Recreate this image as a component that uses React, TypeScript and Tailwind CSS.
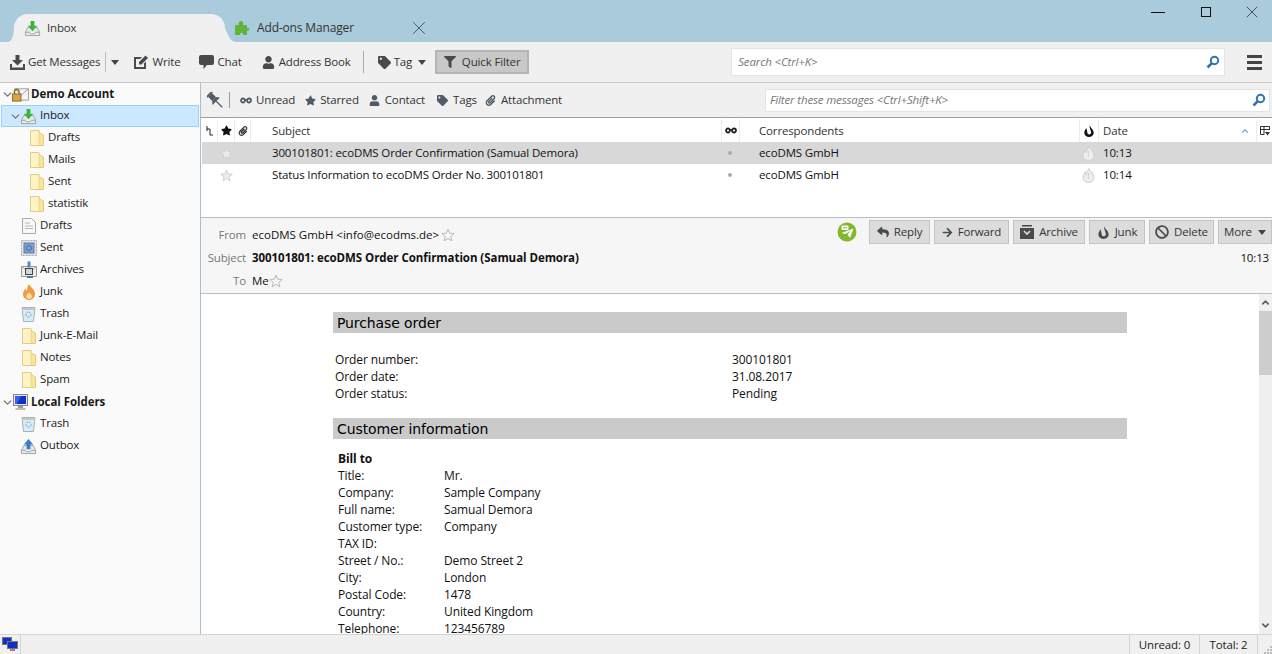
import { ReactNode } from 'react';
import {
  FaUser, FaTag, FaFilter, FaStar, FaPaperclip, FaBan, FaReply, FaArrowRight,
} from 'react-icons/fa';
import { ChevronDown, ChevronUp, X } from 'lucide-react';

const Tray = ({ arrow, up }: { arrow: string; up?: boolean }) => (
  <svg width="17" height="17" viewBox="0 0 18 18" className="shrink-0">
    <path d="M4 8 L1.5 13 V16.5 H16.5 V13 L14 8 Z" fill="#e6e9ea" stroke="#9aa3a8" />
    <path d="M1.5 13 H6 L7 14.5 H11 L12 13 H16.5" fill="#fff" stroke="#9aa3a8" />
    {up ? (
      <path d="M9 1 L14 7 H11 V12 H7 V7 H4 Z" fill={arrow} />
    ) : (
      <path d="M7 1 H11 V6 H14 L9 12 L4 6 H7 Z" fill={arrow} />
    )}
  </svg>
);

const Folder = () => (
  <svg width="14" height="16" viewBox="0 0 14 16" className="shrink-0">
    <path d="M.5 .5 H9 L9.5 3 L13.5 5 V15.5 H.5 Z" fill="#fbe39a" stroke="#e4cd83" />
    <path d="M9 1 V15" stroke="#e8d48e" />
    <rect x="1" y="1" width="7.5" height="14" fill="#fdf3c4" />
  </svg>
);

const DraftIcon = () => (
  <svg width="14" height="16" viewBox="0 0 14 16" className="shrink-0">
    <path d="M.5 .5 H9.5 L13.5 4.5 V15.5 H.5 Z" fill="#f7f7f7" stroke="#aaa" />
    <path d="M3 5 H8 M3 8 H11 M3 10.5 H11" stroke="#bbb" />
  </svg>
);

const SentIcon = () => (
  <svg width="16" height="16" viewBox="0 0 16 16" className="shrink-0">
    <rect x=".5" y=".5" width="15" height="15" fill="#e4e4e4" stroke="#aaa" strokeDasharray="2 1" />
    <rect x="3" y="3" width="10" height="10" fill="#7b9fcf" stroke="#5a7fb0" />
    <circle cx="8" cy="8" r="2.5" fill="none" stroke="#4d6f9f" />
  </svg>
);

const ArchiveIcon = () => (
  <svg width="16" height="18" viewBox="0 0 16 18" className="shrink-0">
    <path d="M.5 5.5 H15.5 V15.5 H.5 Z" fill="#eee" stroke="#999" />
    <path d="M.5 5.5 L8 11 L15.5 5.5" fill="none" stroke="#aaa" />
    <rect x="6.5" y=".5" width="3" height="6" fill="#4f8fc4" />
    <rect x="4.5" y="7.5" width="7" height="6" fill="#d5d5d5" stroke="#444" />
    <path d="M6 15 H12 V17 H6 Z" fill="#3c7db3" />
  </svg>
);

const JunkIcon = () => (
  <svg width="14" height="16" viewBox="0 0 14 16" className="shrink-0">
    <path d="M7 0 C8 3 13 5 13 10 C13 13.5 10 16 7 16 C4 16 1 13.5 1 10 C1 7.5 2.5 6 3.5 4.5 C4 6 4.5 6.5 5.2 6.8 C5 4 5.5 2 7 0 Z" fill="#ef9a3e" />
    <path d="M7 8 C8 10 10 10.5 10 12.5 C10 14 8.5 15 7 15 C5.5 15 4 14 4 12.5 C4 10.5 6.5 10 7 8 Z" fill="#fbdca8" />
  </svg>
);

const TrashIcon = () => (
  <svg width="15" height="16" viewBox="0 0 14 16" className="shrink-0">
    <path d="M.5 1.5 H13.5 L12 15.5 H2 Z" fill="#d9ecf5" stroke="#a3b4bc" />
    <path d="M.5 3 H13.5" stroke="#c6c6c6" strokeWidth="2" />
    <circle cx="7" cy="8.5" r="2.5" fill="none" stroke="#6d9fc0" strokeDasharray="2 1" />
  </svg>
);

const Monitor = () => (
  <svg width="15" height="16" viewBox="0 0 15 16" className="shrink-0">
    <rect x=".5" y=".5" width="14" height="11" fill="#e4e4e4" stroke="#888" />
    <rect x="2" y="2" width="11" height="8" fill="#1030c8" />
    <path d="M2 2 H8 L4 10 H2 Z" fill="#3a62e6" />
    <rect x="5" y="12" width="5" height="2" fill="#999" />
    <rect x="2.5" y="14" width="10" height="2" fill="#bbb" />
  </svg>
);

const AccountIcon = () => (
  <svg width="17" height="16" viewBox="0 0 18 16" className="shrink-0">
    <path d="M3 2.5 H17.5 V14.5 H3 Z" fill="#f4f4f4" stroke="#999" />
    <path d="M3 2.5 L10 9 L17.5 2.5" fill="none" stroke="#999" />
    <rect x=".5" y="8" width="9" height="7.5" fill="#d9a441" stroke="#8b6a22" />
    <path d="M2.5 8 V5.5 A2.5 2.5 0 0 1 7.5 5.5 V8" fill="none" stroke="#8b6a22" strokeWidth="1.3" />
  </svg>
);

const Glasses = ({ className = '' }: { className?: string }) => (
  <svg width="12" height="7" viewBox="0 0 12 7" className={`shrink-0 ${className}`}>
    <circle cx="3" cy="3.5" r="2" fill="none" stroke="currentColor" strokeWidth="1.8" />
    <circle cx="9" cy="3.5" r="2" fill="none" stroke="currentColor" strokeWidth="1.8" />
    <path d="M4 2.6 H8" stroke="currentColor" />
  </svg>
);

const Flame = ({ className = '', size = 14 }: { className?: string; size?: number }) => (
  <svg width={size} height={size} viewBox="0 0 14 14" className={`shrink-0 ${className}`}>
    <path d="M8 0 C8 3 12.5 5 12.5 9 C12.5 12 10 14 7 14 C4 14 1.5 12 1.5 9 C1.5 6.5 3 5 4 3.5 C4 5 5 6 5 8.5 C5 10 6 11 7 11 C8.5 11 9.5 10 9.5 8.5 C9.5 6 7 4 8 0 Z" fill="currentColor" />
  </svg>
);

const FaintFlame = () => (
  <svg width="13" height="15" viewBox="0 0 13 15" className="shrink-0">
    <path d="M7 .5 C7.5 3 12 5 12 9.5 C12 12.5 9.5 14.5 6.5 14.5 C3.5 14.5 1 12.5 1 9.5 C1 7 2.5 5 3.5 3.5 C3.5 5 4 6 4.5 7 C4.5 5 5.5 2.5 7 .5 Z" fill="#ededed" stroke="#cfcfcf" />
    <path d="M6.5 5 V11" stroke="#d6d6d6" />
  </svg>
);

const Star = ({ size, fill, stroke }: { size: number; fill: string; stroke: string }) => (
  <svg width={size} height={size} viewBox="0 0 14 14" className="shrink-0">
    <path d="M7 1 L8.7 5.2 L13.2 5.5 L9.7 8.4 L10.9 12.9 L7 10.4 L3.1 12.9 L4.3 8.4 L.8 5.5 L5.3 5.2 Z" fill={fill} stroke={stroke} />
  </svg>
);

const Caret = ({ className = '' }: { className?: string }) => (
  <span className={`block w-0 h-0 border-x-[4px] border-x-transparent border-t-[5px] border-t-[#444] shrink-0 ${className}`} />
);

const Loupe = () => (
  <svg width="14" height="14" viewBox="0 0 14 14" className="shrink-0">
    <circle cx="8.5" cy="5.5" r="3.7" fill="none" stroke="#2f72b0" strokeWidth="2" />
    <path d="M5.8 8.2 L1.5 12.5" stroke="#2f72b0" strokeWidth="2.6" />
  </svg>
);

const Pen = () => (
  <svg width="15" height="14" viewBox="0 0 15 14" className="shrink-0">
    <path d="M0 2 H8 L6 4 H2 V12 H10 V8.5 L12 6.5 V14 H0 Z" fill="#4a4a4a" />
    <path d="M5 7 L11.5 .5 L14 3 L7.5 9.5 H5 Z" fill="#4a4a4a" />
  </svg>
);

const Bubble = () => (
  <svg width="15" height="14" viewBox="0 0 15 14" className="shrink-0">
    <path d="M2 0 H13 A2 2 0 0 1 15 2 V8 A2 2 0 0 1 13 10 H8 L4.5 14 V10 H2 A2 2 0 0 1 0 8 V2 A2 2 0 0 1 2 0 Z" fill="#4a4a4a" />
  </svg>
);

const DownloadIcon = () => (
  <svg width="15" height="15" viewBox="0 0 15 15" className="shrink-0">
    <path d="M5.5 0 H9.5 V5 H13 L7.5 10.5 L2 5 H5.5 Z" fill="#4a4a4a" />
    <path d="M0 9 H2 V12.5 H13 V9 H15 V15 H0 Z" fill="#4a4a4a" />
  </svg>
);

const Pin = () => (
  <svg width="17" height="17" viewBox="0 0 16 16" className="shrink-0">
    <g transform="rotate(-45 8 8)" fill="#4f5b66">
      <rect x="4.5" y="-1" width="7" height="2" />
      <rect x="5.5" y="1" width="5" height="5" />
      <path d="M5.5 6 H10.5 L13 9 H3 Z" />
      <rect x="7.4" y="9" width="1.2" height="8" />
    </g>
  </svg>
);

const FolderRow = ({ icon, label, indent = 0, bold, twisty, selected }: { icon: ReactNode; label: string; indent?: number; bold?: boolean; twisty?: boolean; selected?: boolean }) => (
  <div className={`h-[22px] mx-[1px] flex items-center border ${selected ? 'bg-[#cce8ff] border-[#99d1ff]' : 'border-transparent'}`} style={{ paddingLeft: indent }}>
    <span className="w-[10px] shrink-0 flex justify-center">
      {twisty && <ChevronDown size={13} strokeWidth={2.5} className="text-[#777] shrink-0" />}
    </span>
    <span className="w-[17px] shrink-0 flex justify-center">{icon}</span>
    <span className={`${bold ? 'ml-[2px] font-bold tracking-[-0.05px]' : 'ml-[3px] pb-[2px]'} text-[#1a1a1a] whitespace-nowrap`}>{label}</span>
  </div>
);

const ToolItem = ({ icon, label, className = 'gap-[4px]' }: { icon: ReactNode; label: string; className?: string }) => (
  <div className={`flex items-center ${className}`}>
    {icon}
    <span className="whitespace-nowrap">{label}</span>
  </div>
);

const HeaderButton = ({ icon, label, w, caret }: { icon?: ReactNode; label: string; w: string; caret?: boolean }) => (
  <div className={`${w} h-[24px] bg-[#dcdcdc] border border-[#c4c4c4] flex items-center justify-center gap-[5px] text-[#333] shrink-0`}>
    {icon}
    <span>{label}</span>
    {caret && <Caret className="ml-[1px]" />}
  </div>
);

const MessageRow = ({ subject, time, selected }: { subject: string; time: string; selected?: boolean }) => (
  <div className={`h-[22px] ml-[1px] flex items-center text-[#111] ${selected ? 'bg-[#d8d8d8]' : ''}`}>
    <span className="w-[33px] shrink-0 flex justify-end pr-[2px]"><Star size={13} fill="#ececec" stroke="#cfcfcf" /></span>
    <span className="w-[16px] shrink-0" />
    <span className="w-[470px] pl-[21px] shrink-0 whitespace-nowrap">{subject}</span>
    <span className="w-[18px] shrink-0 flex justify-center"><span className="w-[4px] h-[4px] rounded-full bg-[#aaa]" /></span>
    <span className="w-[340px] pl-[20px] shrink-0">ecoDMS GmbH</span>
    <span className="w-[19px] shrink-0 flex justify-center"><FaintFlame /></span>
    <span className="pl-[5px]">{time}</span>
  </div>
);

const ColHead = ({ w, children, className = '' }: { w: string; children?: ReactNode; className?: string }) => (
  <div className={`${w} h-full shrink-0 flex items-center border-r border-[#ececec] ${className}`}>{children}</div>
);

const SectionBar = ({ title }: { title: string }) => (
  <div className="h-[21px] bg-[#cacaca] pl-[4px] pt-[2px] flex items-center font-['DejaVu_Sans',sans-serif] text-[14px] text-black">{title}</div>
);

const billTo: [string, string][] = [
  ['Title:', 'Mr.'],
  ['Company:', 'Sample Company'],
  ['Full name:', 'Samual Demora'],
  ['Customer type:', 'Company'],
  ['TAX ID:', ''],
  ['Street / No.:', 'Demo Street 2'],
  ['City:', 'London'],
  ['Postal Code:', '1478'],
  ['Country:', 'United Kingdom'],
  ['Telephone:', '123456789'],
];

const order: [string, string][] = [
  ['Order number:', '300101801'],
  ['Order date:', '31.08.2017'],
  ['Order status:', 'Pending'],
];

export default function App() {
  return (
    <div className="w-[1272px] h-[654px] overflow-hidden flex flex-col bg-white font-['Open_Sans',sans-serif] text-[11.5px] tracking-[-0.15px] text-[#333]">
      {/* Title bar / tabs */}
      <div className="h-[42px] shrink-0 bg-[#a9cbdc] flex items-end text-[#333]">
        <div className="relative ml-[14px] w-[211px] h-[28px] bg-[#f0f0f0] rounded-t-[14px] flex items-center pl-[10px] gap-[6px]">
          {/* flared tab feet */}
          <svg width="6" height="14" viewBox="0 0 6 14" className="absolute -left-[6px] bottom-0">
            <path d="M6 0 C6 8 3 14 0 14 H6 Z" fill="#f0f0f0" />
          </svg>
          <svg width="11" height="14" viewBox="0 0 11 14" className="absolute -right-[11px] bottom-0">
            <path d="M0 0 C3 8 6 14 11 14 H0 Z" fill="#f0f0f0" />
          </svg>
          <Tray arrow="#3eb53a" />
          <span>Inbox</span>
        </div>
        <div className="w-[208px] h-[28px] flex items-center pl-[9px]">
          <svg width="16" height="16" viewBox="0 0 16 16" className="shrink-0 relative">
            <path d="M1 5 H5 C4 2 6 1 7 1 C8 1 10 2 9 5 H13 V8 C16 7 16 11 13 11 V15 H9 C10 12 6 12 6 15 H1 Z" fill="#62b33c" />
          </svg>
          <span className="ml-[7px] w-[151px] text-[12px]">Add-ons Manager</span>
          <X size={22} strokeWidth={0.8} className="text-[#333] shrink-0" />
        </div>
        <div className="ml-auto h-full flex items-start pt-[6px] text-[#111]">
          <div className="w-[14px] h-[12px] flex items-center"><span className="w-full h-[1px] bg-[#111]" /></div>
          <div className="ml-[36px] w-[10px] h-[10px] mt-[1px] border border-[#111]" />
          <X size={20} strokeWidth={0.8} className="ml-[31px] mr-[10px] -mt-[4px] text-[#111]" />
        </div>
      </div>

      {/* Main toolbar */}
      <div className="h-[41px] shrink-0 bg-[#f0f0f0] border-b border-[#c8c8c8] flex items-center">
        <ToolItem className="ml-[10px] gap-[3px]" icon={<DownloadIcon />} label="Get Messages" />
        <span className="ml-[5px] w-[1px] h-[20px] bg-[#bbb]" />
        <Caret className="ml-[5px]" />
        <ToolItem className="ml-[15px] gap-[3px]" icon={<Pen />} label="Write" />
        <ToolItem className="ml-[19px] gap-[3px]" icon={<Bubble />} label="Chat" />
        <ToolItem className="ml-[20px] gap-[4px]" icon={<FaUser size={13} className="text-[#4a4a4a]" />} label="Address Book" />
        <span className="ml-[12px] w-[1px] h-[22px] bg-[#aaa]" />
        <ToolItem className="ml-[14px] gap-[3px]" icon={<FaTag size={13} className="text-[#4a4a4a]" />} label="Tag" />
        <Caret className="ml-[6px]" />
        <div className="ml-[9px] w-[94px] h-[24px] bg-[#c8c8c8] border-2 border-[#b4b4b4] flex items-center justify-center gap-[6px]">
          <FaFilter size={12} className="text-[#4a4a4a]" />
          <span>Quick Filter</span>
        </div>
        <div className="ml-[202px] w-[494px] h-[28px] bg-white border border-[#e4e4e4] flex items-center justify-between pl-[6px] pr-[4px] italic text-[#777]">
          <span>Search &lt;Ctrl+K&gt;</span>
          <span className="not-italic"><Loupe /></span>
        </div>
        <div className="ml-[22px] w-[15px] flex flex-col gap-[3px]">
          <span className="h-[3px] bg-[#444]" />
          <span className="h-[3px] bg-[#444]" />
          <span className="h-[3px] bg-[#444]" />
        </div>
      </div>

      <div className="flex-1 min-h-0 flex">
        {/* Folder pane */}
        <div className="w-[201px] shrink-0 bg-[#fafafa] border-r border-[#a9bcd0]">
          <FolderRow twisty bold icon={<AccountIcon />} label="Demo Account" />
          <FolderRow twisty selected indent={8} icon={<Tray arrow="#3eb53a" />} label="Inbox" />
          <FolderRow indent={16} icon={<Folder />} label="Drafts" />
          <FolderRow indent={16} icon={<Folder />} label="Mails" />
          <FolderRow indent={16} icon={<Folder />} label="Sent" />
          <FolderRow indent={16} icon={<Folder />} label="statistik" />
          <FolderRow indent={8} icon={<DraftIcon />} label="Drafts" />
          <FolderRow indent={8} icon={<SentIcon />} label="Sent" />
          <FolderRow indent={8} icon={<ArchiveIcon />} label="Archives" />
          <FolderRow indent={8} icon={<JunkIcon />} label="Junk" />
          <FolderRow indent={8} icon={<TrashIcon />} label="Trash" />
          <FolderRow indent={8} icon={<Folder />} label="Junk-E-Mail" />
          <FolderRow indent={8} icon={<Folder />} label="Notes" />
          <FolderRow indent={8} icon={<Folder />} label="Spam" />
          <FolderRow twisty bold icon={<Monitor />} label="Local Folders" />
          <FolderRow indent={8} icon={<TrashIcon />} label="Trash" />
          <FolderRow indent={8} icon={<Tray arrow="#3a7fc4" up />} label="Outbox" />
        </div>

        <div className="flex-1 min-w-0 flex flex-col">
          {/* Quick filter bar */}
          <div className="h-[35px] shrink-0 bg-[#f0f0f0] border-b border-[#a0a0a0] flex items-center">
            <span className="ml-[6px]"><Pin /></span>
            <span className="ml-[5px] w-[1px] h-[16px] bg-[#999]" />
            <ToolItem className="ml-[10px] gap-[4px]" icon={<Glasses className="text-[#4f5b66]" />} label="Unread" />
            <ToolItem className="ml-[10px] gap-[4px]" icon={<FaStar size={11} className="text-[#4f5b66]" />} label="Starred" />
            <ToolItem className="ml-[10px] gap-[5px]" icon={<FaUser size={11} className="text-[#4f5b66]" />} label="Contact" />
            <ToolItem className="ml-[12px] gap-[5px]" icon={<FaTag size={11} className="text-[#4f5b66]" />} label="Tags" />
            <ToolItem className="ml-[8px] gap-[5px]" icon={<FaPaperclip size={11} className="text-[#4f5b66]" />} label="Attachment" />
            <div className="ml-auto mr-[2px] w-[505px] h-[23px] bg-white border border-[#e4e4e4] flex items-center justify-between pl-[4px] pr-[3px] italic text-[#777]">
              <span>Filter these messages &lt;Ctrl+Shift+K&gt;</span>
              <span className="not-italic"><Loupe /></span>
            </div>
          </div>

          {/* Thread pane */}
          <div className="h-[100px] shrink-0 border-b border-[#b4c0cc]">
            <div className="h-[24px] pt-[1px] flex items-center text-[#333]">
              <ColHead w="w-[17px]" className="justify-center">
                <svg width="7" height="10" viewBox="0 0 7 10"><path d="M1 0 V5 M1 3 H4 V9 H7" fill="none" stroke="#222" /></svg>
              </ColHead>
              <ColHead w="w-[17px]" className="justify-center"><FaStar size={11} className="text-[#111]" /></ColHead>
              <ColHead w="w-[16px]" className="justify-center"><FaPaperclip size={10} className="text-[#333]" /></ColHead>
              <ColHead w="w-[471px]" className="pl-[21px]">Subject</ColHead>
              <ColHead w="w-[18px]" className="justify-center"><Glasses className="text-[#222]" /></ColHead>
              <ColHead w="w-[340px]" className="pl-[19px]">Correspondents</ColHead>
              <ColHead w="w-[19px]" className="justify-center"><Flame size={12} className="text-[#111]" /></ColHead>
              <ColHead w="w-[158px]" className="pl-[4px] justify-between pr-[6px]">
                Date
                <ChevronUp size={10} strokeWidth={3} className="text-[#6fb0d8]" />
              </ColHead>
              <div className="pl-[3px]">
                <svg width="10" height="10" viewBox="0 0 10 10"><path d="M.5 .5 H9.5 V4 M.5 .5 V8.5 H4 M.5 3.5 H9.5 M4 .5 V8.5" fill="none" stroke="#333" /><path d="M5 6 H10 L7.5 9.5 Z" fill="#333" /></svg>
              </div>
            </div>
            <MessageRow selected subject="300101801: ecoDMS Order Confirmation (Samual Demora)" time="10:13" />
            <MessageRow subject="Status Information to ecoDMS Order No. 300101801" time="10:14" />
          </div>

          {/* Message header */}
          <div className="h-[76px] shrink-0 bg-[#f6f6f6] border-b border-[#b4c0cc] relative text-[#111]">
            <div className="flex flex-col pt-[5px]">
              <div className="h-[23px] flex items-center">
                <span className="w-[45px] text-right text-[#777]">From</span>
                <span className="ml-[6px] tracking-normal">ecoDMS GmbH &lt;info@ecodms.de&gt;</span>
                <span className="ml-[2px]"><Star size={14} fill="#f6f6f6" stroke="#b5bcc0" /></span>
              </div>
              <div className="h-[24px] flex items-center justify-between pr-[3px]">
                <div className="flex items-center">
                  <span className="w-[45px] text-right text-[#777]">Subject</span>
                  <span className="ml-[6px] font-bold tracking-[-0.05px]">300101801: ecoDMS Order Confirmation (Samual Demora)</span>
                </div>
                <span>10:13</span>
              </div>
              <div className="h-[22px] flex items-center">
                <span className="w-[45px] text-right text-[#777]">To</span>
                <span className="ml-[6px]">Me</span>
                <Star size={14} fill="#f6f6f6" stroke="#b5bcc0" />
              </div>
            </div>
            {/* action buttons sit over the From row */}
            <div className="absolute top-[2px] right-0 flex items-center gap-[4px]">
              <svg width="20" height="20" viewBox="0 0 20 20" className="mr-[8px]">
                <circle cx="10" cy="10" r="9.5" fill="#82b72e" />
                <path d="M4.5 11 L16.5 6.5 L13 16 L10.5 12.5 L14 8.5 L8.5 12 Z" fill="#fff" />
                <rect x="4.5" y="3.5" width="7" height="4.5" rx="1" fill="#fff" />
                <path d="M6 5.7 H10" stroke="#82b72e" />
              </svg>
              <HeaderButton w="w-[61px]" icon={<FaReply size={12} className="text-[#4a4a4a]" />} label="Reply" />
              <HeaderButton w="w-[75px]" icon={<FaArrowRight size={11} className="text-[#4a4a4a]" />} label="Forward" />
              <HeaderButton w="w-[72px]" icon={
                <svg width="14" height="14" viewBox="0 0 14 14"><path d="M2 0 H12 V1.5 H2 Z M0 3 H14 V14 H0 Z" fill="#4a4a4a" /><path d="M4 6 L7 9 L10 6" fill="none" stroke="#dcdcdc" strokeWidth="1.6" /></svg>
              } label="Archive" />
              <HeaderButton w="w-[56px]" icon={<Flame size={13} className="text-[#4a4a4a]" />} label="Junk" />
              <HeaderButton w="w-[65px]" icon={<FaBan size={14} className="text-[#4a4a4a]" />} label="Delete" />
              <HeaderButton w="w-[54px]" label="More" caret />
            </div>
          </div>

          {/* Message body */}
          <div className="flex-1 min-h-0 flex">
            <div className="flex-1 min-w-0 overflow-hidden bg-white pt-[18px] pl-[132px] text-[12px] tracking-[-0.1px] text-[#111] leading-[17px]">
              <div className="w-[794px]">
                <SectionBar title="Purchase order" />
                <div className="mt-[18px] pl-[2px]">
                  {order.map(([k, v]) => (
                    <div key={k} className="flex h-[17px]">
                      <span className="w-[397px] shrink-0">{k}</span>
                      <span>{v}</span>
                    </div>
                  ))}
                </div>
                <div className="mt-[16px]"><SectionBar title="Customer information" /></div>
                <div className="mt-[11px] pl-[5px]">
                  <div className="font-bold h-[17px]">Bill to</div>
                  {billTo.map(([k, v]) => (
                    <div key={k} className="flex h-[17px]">
                      <span className="w-[106px] shrink-0">{k}</span>
                      <span>{v}</span>
                    </div>
                  ))}
                </div>
              </div>
            </div>
            <div className="w-[13px] shrink-0 bg-[#f0f0f0] flex flex-col">
              <div className="h-[17px] flex items-center justify-center"><ChevronUp size={11} strokeWidth={3.5} className="text-[#606060]" /></div>
              <div className="h-[64px] bg-[#cdcdcd]" />
              <div className="flex-1" />
              <div className="h-[17px] flex items-center justify-center"><ChevronDown size={11} strokeWidth={3.5} className="text-[#606060]" /></div>
            </div>
          </div>
        </div>
      </div>

      {/* Status bar */}
      <div className="h-[20px] shrink-0 bg-[#f0f0f0] border-t border-[#d4d4d4] flex items-center text-[#222]">
        <div className="w-[21px] h-full border-r border-[#d4d4d4] flex items-center justify-center">
          <svg width="16" height="15" viewBox="0 0 16 15">
            <rect x=".5" y=".5" width="9" height="7" fill="#1030c8" stroke="#777" />
            <rect x="5.5" y="4.5" width="10" height="7" fill="#1030c8" stroke="#777" />
            <rect x="8" y="12" width="5" height="2" fill="#888" />
          </svg>
        </div>
        <div className="ml-auto w-[71px] h-full border-x border-[#d4d4d4] flex items-center justify-center">Unread: 0</div>
        <div className="w-[58px] h-full border-r border-[#d4d4d4] flex items-center justify-center">Total: 2</div>
        <div className="w-[14px] h-full flex items-end justify-end">
          <svg width="10" height="10" viewBox="0 0 10 10" className="text-[#bbb]">
            <path d="M8 2 h2 v2 h-2 Z M5 5 h2 v2 h-2 Z M8 5 h2 v2 h-2 Z M2 8 h2 v2 h-2 Z M5 8 h2 v2 h-2 Z M8 8 h2 v2 h-2 Z" fill="currentColor" />
          </svg>
        </div>
      </div>
    </div>
  );
}
